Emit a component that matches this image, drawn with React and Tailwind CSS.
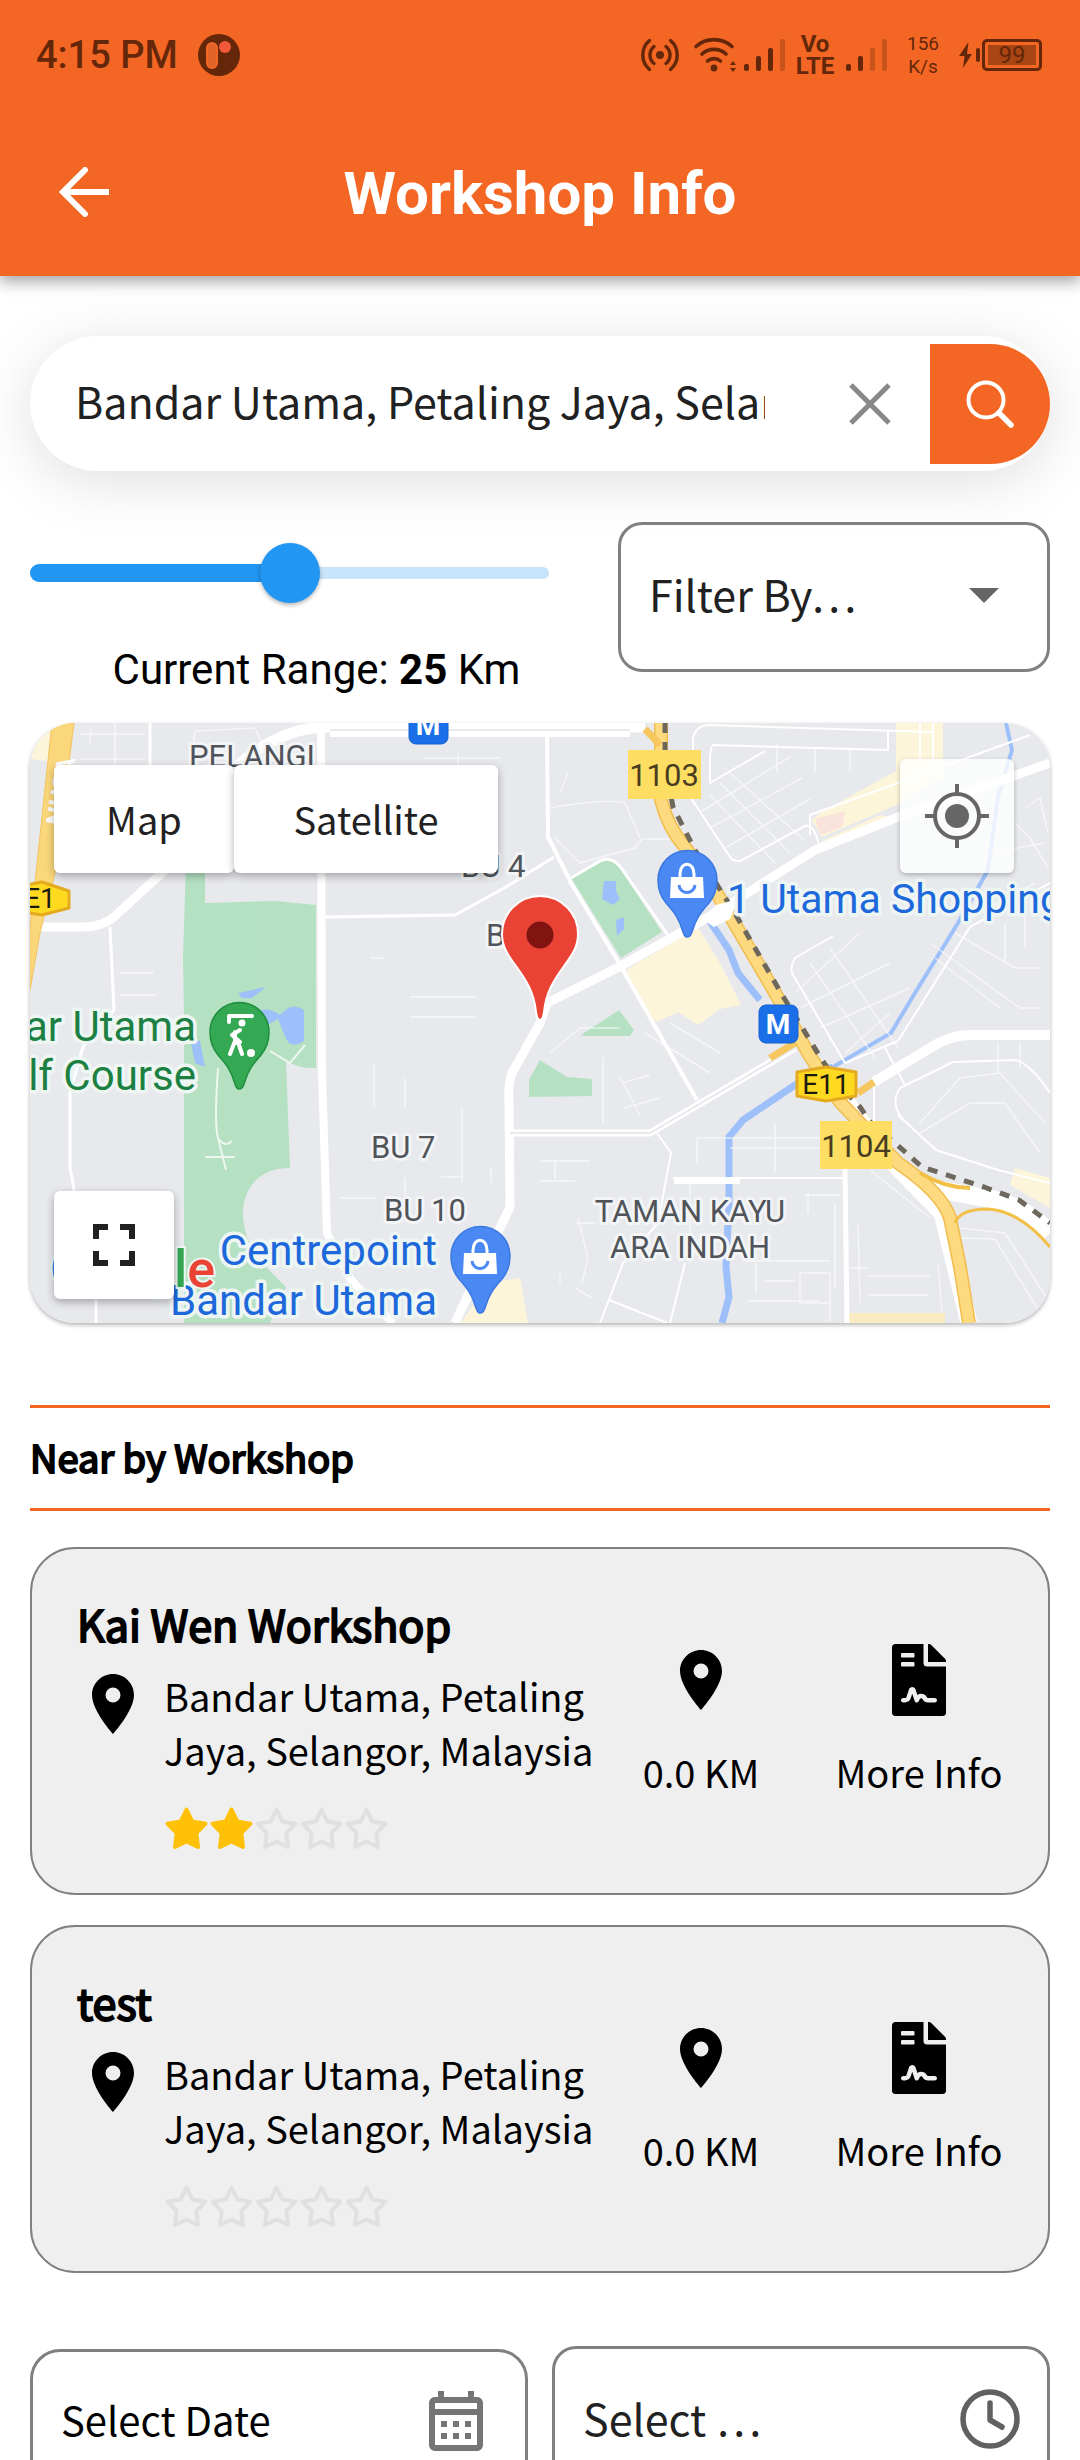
import React, { useState } from "react";
import {
  MdLocationOn,
  MdFullscreen,
  MdOutlineCalendarMonth,
} from "react-icons/md";
import { FaFileContract } from "react-icons/fa";

const INK = "#64270a";

function SignalBars({ strength }) {
  const tops = [25, 17, 9, 0];
  return (
    <svg width="42" height="33" viewBox="0 0 42 33" aria-hidden="true">
      {tops.map((top, i) => (
        <rect
          key={top}
          x={i * 12}
          y={top}
          width="5"
          height={32 - top}
          rx="2"
          fill={INK}
          opacity={i < strength ? 1 : 0.3}
        />
      ))}
    </svg>
  );
}

function StatusBar() {
  return (
    <div className="flex h-[108px] items-center justify-between pt-[2px] pr-[38px] pl-9 font-['Roboto',sans-serif] text-[#64270a]">
      <div className="flex items-center gap-5">
        <span className="text-[38px] leading-[44px] font-medium">4:15 PM</span>
        <svg width="42" height="42" viewBox="0 0 42 42" aria-hidden="true">
          <circle cx="21" cy="21" r="21" fill={INK} />
          <rect x="8" y="8" width="12" height="27" rx="6" fill="#f46623" />
          <rect x="10" y="10" width="8" height="23" rx="4" fill="#e0632a" />
          <circle cx="27" cy="13" r="6" fill="#f2583a" />
        </svg>
      </div>
      <div className="flex items-center">
        <svg width="40" height="34" viewBox="0 0 40 34" fill="none" stroke={INK} strokeWidth="3.4" strokeLinecap="round" aria-hidden="true">
          <circle cx="20" cy="17" r="4" fill={INK} stroke="none" />
          <path d="M14 8.5a11 11 0 0 0 0 17M26 8.5a11 11 0 0 1 0 17M9.500 2.500a19 19 0 0 0 0 29M30.500 2.500a19 19 0 0 1 0 29" />
        </svg>
        <svg className="ml-[13px]" width="46" height="36" viewBox="0 0 46 36" fill="none" stroke={INK} strokeWidth="3.6" strokeLinecap="round" aria-hidden="true">
          <path d="M3 9.500a27 27 0 0 1 36 0M9 17a18 18 0 0 1 24 0M14.500 24a10 10 0 0 1 13 0" />
          <circle cx="21" cy="31" r="3.4" fill={INK} stroke="none" />
          <path d="M37 28l3-4 3 4zM37 31l3 4 3-4z" fill={INK} stroke="none" />
        </svg>
        <div className="ml-[5px] flex">
          <SignalBars strength={3} />
        </div>
        <div className="ml-[10px] flex w-[38px] flex-col items-center text-[24px] leading-[22px] font-bold">
          <span>Vo</span>
          <span>LTE</span>
        </div>
        <div className="ml-[12px] flex">
          <SignalBars strength={2} />
        </div>
        <div className="ml-[19px] flex w-8 flex-col items-center text-[19px] leading-[23px]">
          <span>156</span>
          <span>K/s</span>
        </div>
        <svg className="ml-[20px]" width="21" height="28" viewBox="0 0 21 28" fill={INK} aria-hidden="true">
          <path d="M9.500 1L0 15h5.500L4 27l9-14H8z" />
          <rect x="17" y="7" width="4" height="14" rx="2" />
        </svg>
        <span className="ml-[2px] flex h-8 w-[60px] rounded-[5px] border-[3px] border-[#64270a] p-[3px]">
          <span className="flex flex-1 items-center justify-center bg-[#a94413] text-[24px] leading-[20px]">99</span>
        </span>
      </div>
    </div>
  );
}

function Header() {
  return (
    <header className="relative z-10 shrink-0 bg-[#f46623] shadow-[0_6px_14px_rgba(0,0,0,0.35)]">
      <StatusBar />
      <div className="grid h-[168px] grid-cols-[120px_1fr_120px] items-center px-6">
        <button type="button" aria-label="Back" className="flex size-[120px] items-center justify-center text-white">
          <svg width="50" height="50" viewBox="0 0 50 50" fill="none" stroke="currentColor" strokeWidth="6" aria-hidden="true">
            <path d="M50 25H4" />
            <path d="M26 3L4 25l22 22" strokeLinecap="round" strokeLinejoin="miter" />
          </svg>
        </button>
        <h1 className="pt-1 text-center font-['Roboto',sans-serif] text-[60px] leading-[72px] font-bold text-white">
          Workshop Info
        </h1>
      </div>
    </header>
  );
}

function SearchBar() {
  const [value, setValue] = useState("Bandar Utama, Petaling Jaya, Selangor, Malaysia");
  return (
    <form
      className="flex h-[135px] items-center rounded-full bg-white pl-[45px] shadow-[0_10px_60px_rgba(0,0,0,0.13)]"
      onSubmit={(e) => e.preventDefault()}
    >
      <input
        type="text"
        aria-label="Search location"
        value={value}
        onChange={(e) => setValue(e.target.value)}
        className="h-full min-w-0 flex-1 bg-transparent pb-2 text-[43px] text-[#212121] outline-none"
      />
      <button type="button" aria-label="Clear" onClick={() => setValue("")} className="ml-11 flex h-[120px] w-[121px] items-center justify-center">
        <svg width="42" height="42" viewBox="0 0 42 42" stroke="#888" strokeWidth="5" aria-hidden="true">
          <path d="M2 2l38 38M40 2L2 40" />
        </svg>
      </button>
      <button type="submit" aria-label="Search" className="flex size-[120px] items-center justify-center rounded-r-full bg-[#f46623]">
        <svg width="50" height="50" viewBox="0 0 50 50" fill="none" stroke="#fff" aria-hidden="true">
          <circle cx="21" cy="21" r="17.500" strokeWidth="4" />
          <path d="M34 34l12 12" strokeWidth="5.500" strokeLinecap="round" />
        </svg>
      </button>
    </form>
  );
}

function RangeControl() {
  const [range, setRange] = useState(25);
  return (
    <div className="flex flex-1 flex-col gap-[43px] pt-[21px]">
      <div className="relative mr-[54px] flex h-[60px] items-center">
        <div className="absolute right-0 left-0 h-3 rounded-full bg-[#c8e4fb]" />
        <div className="absolute left-0 h-[18px] rounded-full bg-[#2196f3]" style={{ width: `${range * 2}%` }} />
        <input
          id="range"
          type="range"
          min="0"
          max="50"
          value={range}
          onChange={(e) => setRange(Number(e.target.value))}
          className="relative h-[60px] w-full cursor-pointer appearance-none bg-transparent [&::-webkit-slider-thumb]:size-[60px] [&::-webkit-slider-thumb]:appearance-none [&::-webkit-slider-thumb]:rounded-full [&::-webkit-slider-thumb]:bg-[#2196f3] [&::-webkit-slider-thumb]:shadow-[0_2px_4px_rgba(0,0,0,0.3)]"
        />
      </div>
      <label htmlFor="range" className="text-center font-['Roboto',sans-serif] text-[42px] leading-[48px] text-black">
        Current Range: <b>{range}</b> Km
      </label>
    </div>
  );
}

function FilterSelect() {
  return (
    <div className="relative h-[150px] w-[432px]">
      <select
        aria-label="Filter by"
        className="size-full appearance-none rounded-[24px] border-[3px] border-[#808080] bg-transparent pr-24 pb-2 pl-7 text-[43px] text-[#212121]"
      >
        <option>Filter By…</option>
      </select>
      <svg className="pointer-events-none absolute top-[66px] right-[51px]" width="30" height="15" viewBox="0 0 30 15" aria-hidden="true">
        <path d="M0 0h30L15 15z" fill="#666" />
      </svg>
    </div>
  );
}

function PlacePin({ x, y, fill, edge, children }) {
  return (
    <g transform={`translate(${x} ${y})`}>
      <path
        d="M0 0C-2 0-3-2-4-5C-8-19-13-25-21-34C-26-40-29-48-29-57A29.500 29.500 0 0 1 30-57C30-48 27-40 22-34C14-25 9-19 5-5C4-2 2 0 0 0z"
        fill={fill}
        stroke={edge}
        strokeWidth="1.500"
      />
      {children}
    </g>
  );
}

function Bag() {
  return (
    <g>
      <path d="M-16-60H16L17-39H-17z" fill="#fff" />
      <path d="M-7-58V-63C-7-76 7-76 7-63V-58" fill="none" stroke="#fff" strokeWidth="3" />
      <path d="M-8-52C-7-42 7-42 8-52" fill="none" stroke="#4a89f3" strokeWidth="3" />
    </g>
  );
}

function Metro({ x, y }) {
  return (
    <g>
      <rect x={x} y={y} width="39" height="38" rx="7" fill="#1a6fe8" stroke="#1560cf" />
      <text x={x + 19} y={y + 29} textAnchor="middle" fontSize="28" fontWeight="700" fill="#fff">
        M
      </text>
    </g>
  );
}

function MapCanvas() {
  return (
    <svg
      className="block size-full font-['Roboto',sans-serif]"
      viewBox="0 0 1020 600"
      preserveAspectRatio="xMidYMid slice"
      role="img"
      aria-label="Map of Bandar Utama"
    >
      <rect width="1020" height="600" fill="#e8e9ed" />

      {/* parks and shopping blocks */}
      <g fill="#b5e1c2">
        <path d="M156 140H175V180L245 178L286 182V345Q270 346 256 338L260 445C225 445 213 470 213 490C213 525 237 545 256 564L240 600H154V297L153 234z" />
        <path d="M541 155L572 138Q582 136 589 144L632 209L591 235z" />
        <path d="M551 312L589 287L604 307L600 313H555z" />
        <path d="M499 374V357L510 337L537 354L562 356V373z" />
      </g>
      <g fill="#fdf5d9">
        <path d="M596 247L668 204L690 240L711 282L690 286L668 302L648 289L627 299L615 290z" />
        <path d="M866 0H913V54L871 80L792 114L782 97L790 90L866 48z" />
        <path d="M792 118L850 92L866 96L800 126z" />
        <path d="M985 445L1020 455V485L980 462z" />
        <path d="M460 560L490 555L498 600H430z" />
        <path d="M815 590H915V600H815z" fill="#fbecc4" />
        <path d="M0 20L24 5L18 38L0 36z" />
      </g>
      <path d="M785 96L815 88L812 104L790 112z" fill="#fae3da" />

      {/* water */}
      <g fill="#9dc0fa">
        <path d="M208 270L236 264L222 275L212 275z" />
        <path d="M215 294Q235 280 250 292Q262 278 274 287V318Q262 326 256 316L248 296L230 306L215 300z" />
        <path d="M160 315L170 318L175 344L165 340z" />
        <path d="M574 158H586V168L590 176L583 182L572 176z" />
        <path d="M586 197L594 194V206L587 213z" />
      </g>
      <g fill="none" stroke="#9dc0fa" strokeLinejoin="round">
        <path d="M976 0L982 27L968 74L958 147L928 200L885 270L861 310L803 344" strokeWidth="4" />
        <path d="M803 344L765 362L713 397L699 414V480L696 544L699 574L692 600" strokeWidth="7" />
        <path d="M679 197L699 227L708 250L730 277" strokeWidth="7" />
      </g>

      {/* minor streets */}
      <g fill="none" stroke="#fff" strokeWidth="1.500" opacity="0.6">
        <path d="M85 0V42M50 11H115M50 36H115M90 250H124M90 272H126M90 295H124M60 20V8L62 6" />
        <path d="M395 35H470M428 30V45M340 235H354M380 274H446M380 294H446M162 30L165 8L225 5L234 25" />
        <path d="M375 355V384M432 385V460M411 454H434M344 341V384M310 475H346M461 445V460M375 455V480" />
        <path d="M690 60L760 130M700 50L775 118M680 72L745 140M672 88L760 34M680 105L772 55M695 125L780 76M747 20V50M785 24V50M820 26V48" />
        <path d="M765 270L830 210M780 240L845 335M800 225L868 325M770 285L860 240M790 305L880 265M815 330L860 290" />
        <path d="M900 220L990 285L1010 285M925 210L985 245H1008M940 195L1005 160M975 200V240M995 190V225M905 235L970 285" />
        <path d="M667 415H790M667 440V415M700 425H790M745 400V450M615 310L680 350M640 300L690 330M573 334V400" />
        <path d="M660 455V540M778 470V490M805 480V565M775 472H810M715 538H800M735 558H765M718 578H790M800 578V598M726 540V570" />
        <path d="M828 500L830 580M838 553H900M838 572H898M820 545H838M908 540L912 590M840 447L900 495M590 354L610 392M592 360L620 352M594 385L630 375" />
        <path d="M890 400L930 355L970 350L1015 400M890 410L940 380H975L1010 430M930 505L975 510L1020 580M925 515L965 516L1010 590M968 320V350M990 320V345" />
        <path d="M520 85Q580 75 595 80L610 115M525 115L550 140L605 125L612 116H640M530 70L538 50M510 438H560M525 438V456M510 458H545" />
        <path d="M548 495L558 535L552 560M545 500H565M545 565L562 575M530 550V560" />
        <path d="M995 85L1010 75L1018 110M985 100L1000 115L1018 145M960 130L1015 120M520 330L550 305H590M770 580H800V550H770z" />
      </g>
      <g fill="none" stroke="#fff" strokeWidth="3" strokeLinejoin="round">
        <path d="M120 0V42M80 204L84 287L53 324L40 370V444L44 467L66 577V600" />
        <path d="M295 194L425 192L476 164L524 134" />
        <path d="M517 8L518 114L541 160L589 240L667 377" strokeWidth="4" />
        <path d="M541 155L570 138Q582 132 592 146L640 215" />
        <path d="M663 30V16Q665 2 680 2L903 9M858 9V27L683 22Q680 24 680 40V60L735 28M661 75L700 134Q705 140 712 137L775 103Q784 100 789 122" strokeWidth="2" />
        <path d="M780 112V92L868 60L1000 12M890 0V40M903 0V45" strokeWidth="2" />
        <path d="M803 213L765 235Q760 243 762 250L815 340L868 318L940 204L1020 160" strokeWidth="2" />
        <path d="M872 395Q860 380 870 365L923 339L985 337Q1000 340 1020 370M868 392L906 427L968 447L1020 460M844 359V400M855 325L875 362" strokeWidth="2" />
        <path d="M627 410L641 430L628 500L593 540L570 600M579 577L637 600M655 540L640 600M643 455H813" strokeWidth="2" />
        <path d="M644 458H710" strokeWidth="6" />
      </g>

      {/* main roads */}
      <g fill="none" stroke="#fff" strokeLinejoin="round">
        <path d="M10 204H53Q72 204 84 194L135 147" strokeWidth="9" />
        <path d="M205 45Q250 3 300 4H615" strokeWidth="11" />
        <path d="M300 11H600" strokeWidth="6" />
        <path d="M291 8L292 350L297 510L321 557L363 600" strokeWidth="8" />
        <path d="M1020 40L868 94L785 127L686 190L589 244L517 280L510 300L482 350Q478 360 479 380L480 484L445 557L425 600" strokeWidth="9" />
        <path d="M480 410H620L765 325" strokeWidth="7" />
        <path d="M1020 312H940Q920 312 900 325L844 359" strokeWidth="10" />
        <path d="M815 446L817 600" strokeWidth="5" />
        <path d="M805 365L868 445L912 490L939 600" strokeWidth="17" />
        <path d="M900 465L955 475Q990 480 1020 510" strokeWidth="18" />
      </g>
      <path d="M480 410H620L765 325" fill="none" stroke="#e8e9ed" strokeWidth="2" />
      <path d="M300 7H600" fill="none" stroke="#e8e9ed" strokeWidth="2" />

      {/* highways */}
      <path d="M22 0H44L25 150L10 210L0 267V205L6 150z" fill="#fbd77c" stroke="#f2c45c" strokeWidth="1" />
      <g fill="none" strokeLinejoin="round">
        <path d="M631 0V77Q638 105 655 124L689 174L751 280L778 330L810 379L827 397L868 440Q912 470 920 495L930 544L939 600" stroke="#f0bd50" strokeWidth="14" />
        <path d="M631 0V77Q638 105 655 124L689 174L751 280L778 330L810 379L827 397L868 440Q912 470 920 495L930 544L939 600" stroke="#fdd97f" strokeWidth="11" />
        <path d="M740 335L765 320M828 370L844 359M615 6L630 22" stroke="#f5c75e" strokeWidth="7" />
        <path d="M925 500Q930 486 958 486Q990 488 1020 524" stroke="#f2c046" strokeWidth="3" />
        <path d="M890 450Q915 465 940 465" stroke="#f2c046" strokeWidth="4" />
        <path d="M635 0V40L643 84L665 127L703 187L751 270L792 337L812 365L830 384L841 400L865 420L892 444L954 464L989 477L1020 500" stroke="#6e685c" strokeWidth="5" strokeDasharray="10 9" />
      </g>
      <path d="M686 182L708 176L700 196L684 204L672 196z" fill="#fff" />
      <g fill="none" stroke="#eef7ef" strokeWidth="2">
        <path d="M188 345Q184 400 188 415L196 447M175 434H205M188 415Q195 425 202 418M240 328L260 340L275 322" />
      </g>

      {/* road shields */}
      <g fontSize="31" textAnchor="middle" fill="#493d21">
        <rect x="598" y="27" width="73" height="49" fill="#fddd62" />
        <text x="634" y="63">1103</text>
        <rect x="790" y="398" width="72" height="48" fill="#fddd62" />
        <text x="826" y="434">1104</text>
      </g>
      <g fill="#fdda20" stroke="#e5ab20" strokeWidth="3" strokeLinejoin="round">
        <path d="M767 349L796 344L826 349V373L796 378L767 373z" />
        <path d="M-20 165L12 159L39 168V185L12 192L-20 187z" />
      </g>
      <g fontSize="28" textAnchor="middle" fill="#1c1a10">
        <text x="796" y="371">E11</text>
        <text x="10" y="185">E1</text>
      </g>
      <Metro x={379} y={-17} />
      <Metro x={729} y={282} />

      {/* labels */}
      <g paintOrder="stroke" stroke="#f3f4f6" strokeWidth="6" strokeLinejoin="round" fill="#50545a" fontSize="31">
        <text x="159" y="44">PELANGI</text>
        <text x="431" y="154">BU 4</text>
        <text x="456" y="223">BU 3</text>
        <text x="341" y="435">BU 7</text>
        <text x="354" y="498">BU 10</text>
        <text x="660" y="499" textAnchor="middle">TAMAN KAYU</text>
        <text x="660" y="535" textAnchor="middle">ARA INDAH</text>
      </g>
      <g paintOrder="stroke" stroke="#eef6f3" strokeWidth="7" strokeLinejoin="round" fontSize="42">
        <g fill="#1c8043" textAnchor="end">
          <text x="166" y="318">Bandar Utama</text>
          <text x="166" y="367">Golf Course</text>
        </g>
        <g fill="#1d69dc">
          <text x="407" y="542" textAnchor="end">Centrepoint</text>
          <text x="407" y="592" textAnchor="end">Bandar Utama</text>
          <text x="697" y="190" fontSize="41">1 Utama Shopping Centre</text>
        </g>
      </g>
      <text x="20" y="564" fontSize="52" fontWeight="500" paintOrder="stroke" stroke="#eef6f3" strokeWidth="4">
        <tspan fill="#4285f4">G</tspan>
        <tspan fill="#ea4335">o</tspan>
        <tspan fill="#fbbc05">o</tspan>
        <tspan fill="#4285f4">g</tspan>
        <tspan fill="#34a853">l</tspan>
        <tspan fill="#ea4335">e</tspan>
      </text>

      <text x="4" y="112" fontSize="26" fontWeight="700" fill="#fff" transform="rotate(-80 14 90)">NUSA</text>

      {/* places */}
      <PlacePin x={657} y={214} fill="#4a89f3" edge="#3b78e0">
        <Bag />
      </PlacePin>
      <PlacePin x={450} y={590} fill="#4a89f3" edge="#3b78e0">
        <Bag />
      </PlacePin>
      <PlacePin x={209} y={366} fill="#34a853" edge="#1e8e3e">
        <path d="M-10-67V-73H13M1-59L-7-54L1-47L-4-46V-57M-4-48L-9-35M-1-47L3-35" fill="none" stroke="#fff" strokeWidth="4" strokeLinejoin="round" strokeLinecap="round" />
        <circle cx="3" cy="-66" r="3.500" fill="#fff" />
        <circle cx="12" cy="-36" r="4" fill="#fff" />
      </PlacePin>
      <g transform="translate(510 297)">
        <path
          d="M0 0C-3 0-3-3-4-8C-6-28-14-40-24-54C-33-66-38-74-38-86A38 38 0 0 1 38-86C38-74 33-66 24-54C14-40 6-28 4-8C3-3 3 0 0 0z"
          fill="#ea4335"
          stroke="#fff"
          strokeWidth="2"
        />
        <circle cx="0" cy="-85" r="13.500" fill="#811411" />
      </g>
    </svg>
  );
}

function MapPanel() {
  return (
    <section aria-label="Map" className="relative h-[600px] overflow-hidden rounded-[45px] shadow-[0_2px_4px_rgba(0,0,0,0.3)]">
      <MapCanvas />
      <div className="absolute top-[42px] left-6 flex h-[108px] text-[38px] text-[#212121]">
        <button type="button" className="w-[180px] rounded-md bg-white pb-[2px] shadow-[0_3px_8px_rgba(0,0,0,0.3)]">Map</button>
        <button type="button" className="w-[264px] rounded-md bg-white pb-[2px] shadow-[0_3px_8px_rgba(0,0,0,0.3)]">Satellite</button>
      </div>
      <button
        type="button"
        aria-label="My location"
        className="absolute top-9 right-9 flex h-[114px] w-[114px] items-center justify-center rounded-md bg-white/80 text-[#666] shadow-[0_2px_5px_rgba(0,0,0,0.25)]"
      >
        <svg width="64" height="64" viewBox="0 0 64 64" fill="none" stroke="currentColor" strokeWidth="4" aria-hidden="true">
          <circle cx="32" cy="32" r="22" />
          <circle cx="32" cy="32" r="12" fill="currentColor" stroke="none" />
          <path d="M32 0v10M32 54v10M0 32h10M54 32h10" />
        </svg>
      </button>
      <button
        type="button"
        aria-label="Full screen"
        className="absolute bottom-6 left-6 flex h-[108px] w-[120px] items-center justify-center rounded-md bg-white text-[#212121] shadow-[0_3px_8px_rgba(0,0,0,0.3)]"
      >
        <MdFullscreen size={72} aria-hidden="true" />
      </button>
    </section>
  );
}

function Star({ filled }) {
  return (
    <svg width="45" height="45" viewBox="0 0 45 45" aria-hidden="true">
      <path
        d="M22.500 3.500L28.300 15.500L41.500 17.700L32.300 27.200L34 41L22.500 35.500L11 41L12.700 27.200L3.500 17.700L16.700 15.500z"
        fill={filled ? "#ffc107" : "none"}
        stroke={filled ? "#ffc107" : "#e0e0e0"}
        strokeWidth="4"
        strokeLinejoin="round"
      />
    </svg>
  );
}

function WorkshopCard({ name, rating }) {
  return (
    <article className="flex items-start rounded-[45px] border-2 border-[#808080] bg-[#efefef] pt-[42px] pr-[39px] pb-[42px] pl-[45px]">
      <div className="min-w-0 flex-1">
        <h3 className="text-[43px] leading-[64px] text-black [-webkit-text-stroke:2px_black]">{name}</h3>
        <div className="flex pt-2">
          <MdLocationOn size={72} className="mt-[5px] shrink-0" aria-hidden="true" />
          <div className="pt-[6px] pl-[15px]">
            <p className="w-[436px] text-[38px] leading-[54px] text-black">
              Bandar Utama, Petaling Jaya, Selangor, Malaysia
            </p>
            <div className="mt-[29px] flex h-[45px]" role="img" aria-label={`${rating} of 5 stars`}>
              {[1, 2, 3, 4, 5].map((n) => (
                <Star key={n} filled={n <= rating} />
              ))}
            </div>
          </div>
        </div>
      </div>
      <div className="mt-[53px] flex w-[130px] flex-col items-center gap-[29px] text-[38px] leading-[54px] text-black">
        <MdLocationOn size={72} aria-hidden="true" />
        <span>0.0 KM</span>
      </div>
      <button type="button" className="mt-[53px] ml-[63px] flex w-[180px] flex-col items-center gap-[29px] text-[38px] leading-[54px] text-black">
        <FaFileContract size={72} aria-hidden="true" />
        <span>More Info</span>
      </button>
    </article>
  );
}

const WORKSHOPS = [
  { name: "Kai Wen Workshop", rating: 2 },
  { name: "test", rating: 0 },
];

export default function App() {
  return (
    <div className="flex h-screen flex-col bg-white font-['Noto_Sans_CJK_KR','Noto_Sans',sans-serif]">
      <Header />
      <main className="flex-1 overflow-y-auto px-[30px] pt-[60px] pb-12 [scrollbar-width:none]">
        <SearchBar />
        <div className="mt-[51px] flex items-start gap-[15px]">
          <RangeControl />
          <FilterSelect />
        </div>
        <div className="mt-[29px]">
          <MapPanel />
        </div>
        <h2 className="mt-[82px] border-y-[3px] border-[#f46623] pt-[21px] pb-[23px] text-[38px] leading-[56px] text-black [-webkit-text-stroke:2px_black]">
          Near by Workshop
        </h2>
        <div className="mt-9 flex flex-col gap-[30px]">
          {WORKSHOPS.map((w) => (
            <WorkshopCard key={w.name} name={w.name} rating={w.rating} />
          ))}
        </div>
        <div className="mt-[73px] grid grid-cols-2 items-center gap-6">
          <button
            type="button"
            className="flex h-36 items-center justify-between rounded-[30px] border-[3px] border-[#808080] pr-[33px] pl-7 text-[40px] leading-[58px] text-black"
          >
            <span className="pb-1">Select Date</span>
            <MdOutlineCalendarMonth size={72} color="#757575" aria-hidden="true" />
          </button>
          <div className="relative h-[150px]">
            <select
              aria-label="Select time"
              className="size-full appearance-none rounded-[24px] border-[3px] border-[#808080] bg-transparent pr-28 pb-2 pl-7 text-[43px] text-[#212121]"
            >
              <option>Select …</option>
            </select>
            <svg className="pointer-events-none absolute top-[43px] right-[30px]" width="60" height="60" viewBox="0 0 60 60" fill="none" stroke="#616161" strokeWidth="5.500" strokeLinecap="round" strokeLinejoin="round" aria-hidden="true">
              <circle cx="30" cy="30" r="27" />
              <path d="M30 14v17l12 7" />
            </svg>
          </div>
        </div>
      </main>
    </div>
  );
}
